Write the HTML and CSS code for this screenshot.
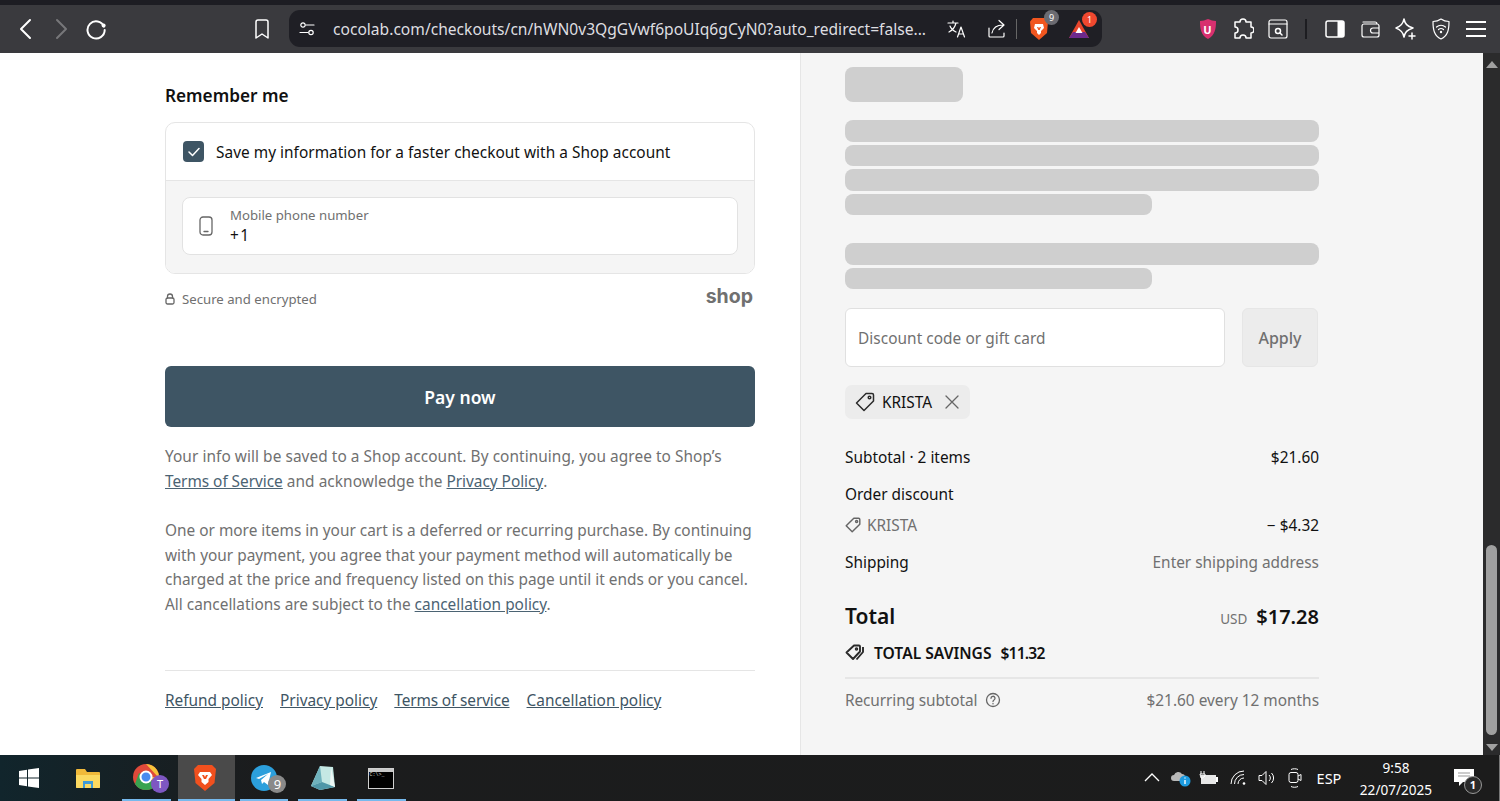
FILE: index.html
```html
<!DOCTYPE html>
<html lang="en">
<head>
<meta charset="utf-8">
<title>Checkout</title>
<link rel="stylesheet" href="styles.css">
</head>
<body>
<header class="chrome">
  <div class="chrome-top"></div>
  <div class="toolbar">
    <span class="slot nav first"><svg width="16" height="22" viewBox="0 0 16 22"><path d="M12 2 3 11l9 9" class="st w2"/></svg></span>
    <span class="slot nav"><svg width="16" height="22" viewBox="0 0 16 22"><path d="M4 2l9 9-9 9" class="st w2 dim"/></svg></span>
    <span class="slot nav"><svg width="22" height="22" viewBox="0 0 22 22"><path d="M19 8.500A8.600 8.600 0 1 0 19.700 12" class="st w2"/><circle cx="18.600" cy="7.400" r="2" fill="#fff"/></svg></span>
    <span class="slot bookmark"><svg width="16" height="20" viewBox="0 0 16 20"><path d="M2 3a2 2 0 0 1 2-2h8a2 2 0 0 1 2 2v16l-6-4-6 4z" class="st w15"/></svg></span>
    <div class="address">
      <span class="site-settings"><svg width="16" height="16" viewBox="0 0 16 16"><circle cx="4" cy="4" r="2.200" class="st w12"/><path d="M7 4h8M1 11.500h8" class="st w12"/><circle cx="12" cy="11.500" r="2.200" class="st w12"/></svg></span>
      <span class="url">cocolab.com/checkouts/cn/hWN0v3QgGVwf6poUIq6gCyN0?auto_redirect=false...</span>
      <span class="addr-icon translate"><svg width="20" height="20" viewBox="0 0 20 20"><path d="M1 4h10M6 2v2M9 4c-1 4-3 7-7 9M3 7c1 3 4 5 6 6M10.500 18l3.500-10 3.500 10M11.800 15h4.400" class="st w12"/></svg></span>
      <span class="addr-icon share"><svg width="20" height="20" viewBox="0 0 20 20"><path d="M2 9v8a1 1 0 0 0 1 1h13a1 1 0 0 0 1-1v-3M5 14c1-5 5-8 11-8M12 1.500 17 6l-5 4.500" class="st w12"/></svg></span>
      <span class="addr-sep"></span>
      <span class="addr-icon brave-mini"><svg width="20" height="24" viewBox="0 0 20 24"><path d="M4 1h12l3 3.500-1 11.500-8 7-8-7L1 4.500z" fill="#f1561f"/><path d="M6 7h8l1 4-3 3v2l-2 2-2-2v-2L5 11z" fill="#fff"/><path d="M8 10h1.300l.7 1.500.7-1.500H12l-1.300 3H9.300z" fill="#f1561f"/></svg><b class="badge grey-badge">9</b></span>
      <span class="addr-icon rewards"><svg width="22" height="20" viewBox="0 0 22 20"><path d="M11 1 21 19H1z" fill="#e8452c"/><path d="M5 13h12l4 6H1z" fill="#6d2a8c"/><path d="M11 8l3.500 6h-7z" fill="#fff"/></svg><b class="badge red-badge">1</b></span>
    </div>
    <span class="slot ublock"><svg width="18" height="22" viewBox="0 0 18 22"><path d="M9 1c3 1 5 2 8 2 0 8-1 14-8 18C2 17 1 11 1 3c3 0 5-1 8-2z" fill="#d8306f"/></svg><b class="ublock-u">U</b></span>
    <span class="slot tool puzzle"><svg width="22" height="22" viewBox="0 0 22 22"><path d="M8 4a3 3 0 0 1 6 0h5v5a3 3 0 0 1 0 6v5h-5a3 3 0 0 0-6 0H3v-5a3 3 0 0 0 0-6V4z" class="st w15"/></svg></span>
    <span class="slot tool find"><svg width="20" height="20" viewBox="0 0 20 20"><rect x="1" y="1" width="18" height="18" rx="2" class="st w12"/><path d="M1 5h18" class="st w12"/><circle cx="10" cy="12" r="2.500" class="st w15"/><path d="m12 14 2 2" class="st w15"/></svg></span>
    <span class="tool-sep"></span>
    <span class="slot tool sidebar"><svg width="20" height="18" viewBox="0 0 20 18"><rect x="1" y="1" width="18" height="16" rx="2" class="st w15"/><path d="M12.500 1H17a2 2 0 0 1 2 2v12a2 2 0 0 1-2 2h-4.500z" fill="#fff"/></svg></span>
    <span class="slot tool wallet"><svg width="20" height="20" viewBox="0 0 20 20"><path d="M3 3h12a2 2 0 0 1 2 2H4a2 2 0 0 0-2 2v9a2 2 0 0 0 2 2h13a2 2 0 0 0 2-2V7a2 2 0 0 0-2-2M19 9h-6a2.500 2.500 0 0 0 0 5h6" class="st w12"/></svg></span>
    <span class="slot tool leo"><svg width="22" height="22" viewBox="0 0 22 22"><path d="M10 1c1 5 3 7 9 9-6 2-8 4-9 9-1-5-3-7-8-9 5-2 7-4 8-9z" class="st w15"/><path d="M18 15v6M15 18h6" class="st w15"/></svg></span>
    <span class="slot tool vpn"><svg width="18" height="22" viewBox="0 0 18 22"><path d="M9 1c2 1.500 5 2.500 8 2.500 0 8-1 14-8 17.500C2 17.500 1 11.500 1 3.500 4 3.500 7 2.500 9 1z" class="st w12"/><path d="M4.500 9a7 7 0 0 1 9 0M6.500 11.500a4 4 0 0 1 5 0" class="st w12"/><circle cx="9" cy="14" r="1.200" fill="#fff"/></svg></span>
    <span class="slot tool menu"><span class="bars"><i></i><i></i><i></i></span></span>
  </div>
</header>

<main class="viewport">
  <section class="left">
    <h2 class="remember">Remember me</h2>
    <div class="card">
      <div class="card-top">
        <span class="checkbox"><svg width="12" height="10" viewBox="0 0 12 10"><path d="M1 5l3.500 3.500L11 1.500" class="st w15"/></svg></span>
        <span class="save-label">Save my information for a faster checkout with a Shop account</span>
      </div>
      <div class="card-bottom">
        <div class="phone-input">
          <svg class="phone-icon" width="14" height="20" viewBox="0 0 14 20"><rect x="1" y="1" width="12" height="18" rx="3" class="gs"/><path d="M5 15.500h4" class="gs"/></svg>
          <div class="phone-text">
            <span class="phone-label">Mobile phone number</span>
            <span class="phone-value">+1</span>
          </div>
        </div>
      </div>
    </div>
    <div class="secure-row">
      <span class="secure"><svg width="10" height="12" viewBox="0 0 10 12"><path d="M2.500 5V3.500a2.500 2.500 0 0 1 5 0V5" class="gs"/><rect x="1" y="5" width="8" height="6" rx="1.500" class="gs"/></svg>Secure and encrypted</span>
      <span class="shop-logo">shop</span>
    </div>
    <button class="pay">Pay now</button>
    <p class="note note-first">Your info will be saved to a Shop account. By continuing, you agree to Shop’s <a>Terms of Service</a> and acknowledge the <a>Privacy Policy</a>.</p>
    <p class="note note-second">One or more items in your cart is a deferred or recurring purchase. By continuing with your payment, you agree that your payment method will automatically be charged at the price and frequency listed on this page until it ends or you cancel. All cancellations are subject to the <a>cancellation policy</a>.</p>
    <nav class="policies"><a>Refund policy</a><a>Privacy policy</a><a class="tight">Terms of service</a><a>Cancellation policy</a></nav>
  </section>

  <aside class="right">
    <div class="skeleton sk-title"></div>
    <div class="sk-group first-group">
      <div class="skeleton sk-line"></div>
      <div class="skeleton sk-line"></div>
      <div class="skeleton sk-line"></div>
      <div class="skeleton sk-line short"></div>
    </div>
    <div class="sk-group second-group">
      <div class="skeleton sk-line"></div>
      <div class="skeleton sk-line short"></div>
    </div>
    <div class="discount">
      <div class="discount-input">Discount code or gift card</div>
      <div class="apply">Apply</div>
    </div>
    <div class="chip">
      <svg width="20" height="20" viewBox="0 0 20 20"><path d="M11 1.500h6a1.500 1.500 0 0 1 1.500 1.500v6L9 18.500 1.500 11z" class="ds"/><circle cx="14.500" cy="5.500" r="1.300" class="ds"/></svg>
      <span>KRISTA</span>
      <svg class="chip-x" width="14" height="14" viewBox="0 0 14 14"><path d="M1 1l12 12M13 1 1 13" class="gs"/></svg>
    </div>
    <div class="row row-subtotal"><span>Subtotal · 2 items</span><span>$21.60</span></div>
    <div class="row row-order"><span>Order discount</span></div>
    <div class="row row-krista">
      <span class="muted krista-label"><svg width="16" height="16" viewBox="0 0 20 20"><path d="M11 1.500h6a1.500 1.500 0 0 1 1.500 1.500v6L9 18.500 1.500 11z" class="gs2"/><circle cx="14.500" cy="5.500" r="1.300" class="gs2"/></svg>KRISTA</span>
      <span>− $4.32</span>
    </div>
    <div class="row row-shipping"><span>Shipping</span><span class="muted">Enter shipping address</span></div>
    <div class="row row-total"><span class="total-label">Total</span><span class="total-amount"><small>USD</small><strong>$17.28</strong></span></div>
    <div class="savings">
      <svg width="20" height="18" viewBox="0 0 20 18"><path d="M9 1.500h5a1 1 0 0 1 1 1v5L8 15 1.500 8.500z" class="ds w2x"/><path d="M18 3v5l-6.500 7.500" class="ds w2x"/><circle cx="11.500" cy="5" r="1" class="ds"/></svg>
      <span>TOTAL SAVINGS</span><span class="savings-amount">$11.32</span>
    </div>
    <div class="row row-recurring">
      <span class="muted recurring"><span>Recurring subtotal</span><svg width="16" height="16" viewBox="0 0 16 16"><circle cx="8" cy="8" r="6.500" class="gs"/><path d="M6 6.300a2 2 0 1 1 3 1.700c-.7.400-1 .8-1 1.500" class="gs"/><circle cx="8" cy="11.700" r=".8" fill="#707070"/></svg></span>
      <span class="muted">$21.60 every 12 months</span>
    </div>
  </aside>

  <div class="scrollbar">
    <span class="arrow up"></span>
    <span class="thumb"></span>
    <span class="arrow down"></span>
  </div>
</main>

<footer class="taskbar">
  <span class="task start"><svg width="20" height="20" viewBox="0 0 20 20"><path d="M0 3l8-1.200V9.500H0zM9 1.600 20 0v9.500H9zM0 10.500h8v7.700L0 17zM9 10.500h11V20L9 18.400z" fill="#fff"/></svg></span>
  <span class="task"><svg width="26" height="22" viewBox="0 0 26 22"><path d="M1 3a1 1 0 0 1 1-1h8l2 3h12a1 1 0 0 1 1 1v14a1 1 0 0 1-1 1H2a1 1 0 0 1-1-1z" fill="#f0b93a"/><path d="M1 8h24v12a1 1 0 0 1-1 1H2a1 1 0 0 1-1-1z" fill="#fbd961"/><path d="M8 14h10v7h-2v-4h-6v4H8z" fill="#3f9ad6"/></svg></span>
  <span class="task open"><svg width="30" height="30" viewBox="0 0 30 30"><circle cx="14" cy="14" r="13" fill="#e0493a"/><path d="M14 14 25 21A13 13 0 0 1 3 21L7 10z" fill="#38a350"/><path d="M14 1a13 13 0 0 1 12 18L14 14h12" fill="#f5c33b"/><circle cx="14" cy="14" r="5.500" fill="#4a8bf0" stroke="#fff" stroke-width="2"/></svg><b class="task-badge purple">T</b></span>
  <span class="task open active"><svg width="24" height="28" viewBox="0 0 24 28"><path d="M5 1h14l4 4-1.500 14L12 27 2.500 19 1 5z" fill="#f1501e"/><path d="M7 8h10l2 3-3.500 4v3L12 21l-3.500-3v-3L5 11z" fill="#fff"/><path d="M9 11h2l1 2 1-2h2l-2 4h-2z" fill="#f1501e"/></svg></span>
  <span class="task open"><svg width="26" height="26" viewBox="0 0 26 26"><circle cx="13" cy="13" r="13" fill="#2c9fdc"/><path d="M5 13 20 7l-3 13-4-3-2 2-1-4 7-6-9 5z" fill="#fff"/></svg><b class="task-badge gray">9</b></span>
  <span class="task open"><svg width="26" height="28" viewBox="0 0 26 28"><path d="M1 22 10 2l13 1 2 20-15 3z" fill="#c5e8e4"/><path d="M1 22 10 2l2 16z" fill="#6fb2bd"/><path d="M12 18l13 5-15 3-9-4z" fill="#4f97a8"/><path d="M21 3l4 20-5-2z" fill="#eef8f6"/></svg></span>
  <span class="task open"><span class="terminal"><span class="terminal-bar"></span><span class="terminal-prompt">C:\&gt;_</span></span></span>
  <div class="tray">
    <span class="tray-item chevron"><svg width="16" height="10" viewBox="0 0 16 10"><path d="M1 8l7-7 7 7" class="wt"/></svg></span>
    <span class="tray-item cloud"><svg width="20" height="18" viewBox="0 0 20 18"><path d="M3 12a3 3 0 0 1 0-6 4.500 4.500 0 0 1 8-1 3 3 0 0 1 3 3v4z" fill="#b8b8b8"/><circle cx="14" cy="12" r="5.500" fill="#1d9be0"/><path d="M14 11v4M14 8.500v1" stroke="#fff" stroke-width="1.400"/></svg></span>
    <span class="tray-item battery"><svg width="20" height="16" viewBox="0 0 20 16"><path d="M3 1v3M6 1v3M2 4h5v2L4.500 8H3z" fill="none" stroke="#fff" stroke-width="1"/><rect x="3" y="5" width="15" height="9" fill="#fff" opacity=".9"/><rect x="18" y="7" width="2" height="5" fill="#fff"/></svg></span>
    <span class="tray-item wifi"><svg width="18" height="16" viewBox="0 0 18 16"><path d="M1 14A13 13 0 0 1 14 1M4.500 14a9.500 9.500 0 0 1 9.500-9.500M8 14a6 6 0 0 1 6-6" class="wt thin"/><circle cx="14" cy="13.500" r="1.300" fill="#fff"/></svg></span>
    <span class="tray-item speaker"><svg width="18" height="16" viewBox="0 0 18 16"><path d="M1 5.500h3L8 1.500v13l-4-4H1zM11 5a4 4 0 0 1 0 6M13.500 3a7 7 0 0 1 0 10" class="wt thin"/></svg></span>
    <span class="tray-item cam"><svg width="14" height="20" viewBox="0 0 14 20"><rect x="1" y="4.500" width="9" height="10" rx="2" class="wt thin"/><path d="m10 8 3-1.500v6L10 11M3 1.500c2-1 5-1 7 0M3 18.500c2 1 5 1 7 0" class="wt thin"/></svg></span>
    <span class="tray-item lang">ESP</span>
    <span class="clock"><span>9:58</span><span>22/07/2025</span></span>
    <span class="tray-item notif"><svg width="20" height="20" viewBox="0 0 20 20"><path d="M0 1h20v13H9l-4 4v-4H0z" fill="#fff"/><path d="M4 5h12M4 8h12" stroke="#999" stroke-width="1"/></svg><b class="notif-count">1</b></span>
    <span class="desk-edge"></span>
  </div>
</footer>
</body>
</html>
```
FILE: styles.css
```css
* { box-sizing: border-box; }
html, body { margin: 0; padding: 0; }
body {
  width: 1500px;
  height: 801px;
  overflow: hidden;
  display: flex;
  flex-direction: column;
  font-family: "Noto Sans", "Open Sans", sans-serif;
  font-size: 15.400px;
  color: #1a1a1a;
  background: #fff;
}
.st { fill: none; stroke: #fff; stroke-linecap: round; stroke-linejoin: round; }
.w12 { stroke-width: 1.200; }
.w15 { stroke-width: 1.500; }
.w2 { stroke-width: 2; }
.dim { stroke: #77777a; }
.gs { fill: none; stroke: #666; stroke-width: 1.300; stroke-linecap: round; stroke-linejoin: round; }
.gs2 { fill: none; stroke: #666; stroke-width: 1.800; stroke-linejoin: round; }
.ds { fill: none; stroke: #2b2b2b; stroke-width: 1.500; stroke-linejoin: round; }
.w2x { stroke-width: 1.900; }
.wt { fill: none; stroke: #fff; stroke-width: 1.300; }
.thin { stroke-width: 1; }

/* browser chrome */
.chrome { flex: none; height: 53px; background: #3a3a3e; }
.chrome-top { height: 5px; background: #1d1d23; }
.toolbar { height: 48px; display: flex; align-items: center; padding-left: 8px; }
.slot { position: relative; flex: none; width: 35px; height: 36px; display: flex; align-items: center; justify-content: center; }
.bookmark { margin-left: 131px; }
.address {
  flex: none;
  margin-left: 10px;
  width: 813px;
  height: 37px;
  margin-top: -1px;
  border-radius: 11px;
  background: #1f1f25;
  display: flex;
  align-items: center;
  color: #e4e4e6;
}
.site-settings { flex: none; width: 44px; padding-left: 10px; display: flex; }
.url { flex: none; width: 610px; font-size: 15.600px; white-space: nowrap; overflow: hidden; color: #dedee0; }
.addr-icon { position: relative; flex: none; display: flex; align-items: center; justify-content: center; }
.translate { width: 20px; margin-left: 4px; }
.share { width: 20px; margin-left: 20px; }
.addr-sep { flex: none; width: 1px; height: 20px; margin-left: 9px; background: #666; }
.brave-mini { width: 24px; margin-left: 10px; }
.rewards { width: 24px; margin-left: 16px; }
.badge {
  position: absolute;
  width: 15px;
  height: 15px;
  border-radius: 50%;
  font-size: 9px;
  line-height: 15px;
  font-weight: 400;
  text-align: center;
  color: #fff;
}
.grey-badge { background: #6b6b72; top: -7px; right: -8px; }
.red-badge { background: #f0482f; top: -7px; right: -6px; }
.ublock { margin-left: 88px; }
.ublock-u { position: absolute; font-size: 11px; color: #fff; font-weight: 700; }
.tool { width: 36px; }
.find { margin-left: -1px; }
.tool-sep { flex: none; width: 2px; height: 20px; margin: 0 10px 0 9px; background: #1d1d21; }
.wallet { margin-left: -1px; }
.leo { margin-left: -1px; }
.menu { margin-left: -1px; }
.bars { display: flex; flex-direction: column; gap: 5px; width: 20px; }
.bars i { display: block; height: 2px; background: #fff; }

/* page */
.viewport { flex: none; height: 702px; display: flex; overflow: hidden; }
.left { flex: none; width: 800px; padding: 31px 45px 0 165px; background: #fff; }
.remember { margin: 0; height: 22px; font-size: 17.200px; font-weight: 600; line-height: 23px; color: #111; }
.card { margin-top: 16px; height: 152px; border: 1px solid #e5e5e5; border-radius: 10px; overflow: hidden; }
.card-top { height: 58px; display: flex; align-items: center; padding-left: 17px; border-bottom: 1px solid #e5e5e5; }
.checkbox { flex: none; width: 21px; height: 21px; margin-right: 12px; border-radius: 4px; background: #3e5564; display: flex; align-items: center; justify-content: center; }
.save-label { color: #111; white-space: nowrap; letter-spacing: .03px; padding-top: 2px; }
.card-bottom { height: 92px; background: #f5f5f5; padding: 16px 16px 0; }
.phone-input { height: 58px; background: #fff; border: 1px solid #e2e2e2; border-radius: 8px; display: flex; align-items: center; padding-left: 16px; }
.phone-icon { flex: none; margin-right: 17px; }
.phone-text { display: flex; flex-direction: column; }
.phone-label { font-size: 13.200px; line-height: 19px; color: #707070; }
.phone-value { font-size: 15.400px; line-height: 20px; letter-spacing: 1.500px; color: #111; padding-top: 1px; }
.secure-row { display: flex; justify-content: space-between; align-items: center; height: 36px; margin-top: 7px; padding-right: 2px; }
.secure { display: flex; align-items: center; gap: 7px; font-size: 13.200px; color: #707070; }
.shop-logo { font-family: "Inter", sans-serif; font-weight: 700; font-size: 19.500px; color: #707070; line-height: 22px; margin-top: -6px; }
.pay {
  display: block;
  width: 100%;
  height: 61px;
  margin-top: 49px;
  border: 0;
  border-radius: 6px;
  background: #3e5564;
  color: #fff;
  font: 600 17.500px "Noto Sans", sans-serif;
}
.note { margin: 0; line-height: 24.500px; color: #707070; }
.note a { color: #4b6373; text-decoration: underline; }
.note-first { margin-top: 18px; letter-spacing: .06px; }
.note-first a { letter-spacing: -.03px; }
.note-second { margin-top: 25px; }
.policies { margin-top: 53px; padding-top: 18px; border-top: 1px solid #e5e5e5; display: flex; gap: 17px; line-height: 24px; }
.policies a { color: #3e5564; text-decoration: underline; }
.policies .tight { letter-spacing: -.12px; }

.right { flex: none; width: 683px; padding: 14px 164px 0 44px; background: #f5f5f5; border-left: 1px solid #e6e6e6; }
.skeleton { background: #cfcfcf; border-radius: 8px; }
.sk-title { width: 118px; height: 35px; }
.sk-group { display: flex; flex-direction: column; gap: 3px; }
.first-group { margin-top: 18px; }
.second-group { margin-top: 28px; }
.sk-line { height: 21.500px; }
.short { width: 307px; }
.discount { display: flex; gap: 17px; margin-top: 19px; padding-right: 1px; }
.discount-input { flex: 1; height: 59px; background: #fff; border: 1px solid #e0e0e0; border-radius: 6px; padding: 1px 0 0 12px; display: flex; align-items: center; color: #707070; letter-spacing: .05px; }
.apply { flex: none; width: 76px; height: 59px; background: #ececec; border: 1px solid #e6e6e6; border-radius: 6px; display: flex; align-items: center; justify-content: center; font-weight: 500; font-size: 16px; color: #707070; }
.chip { margin-top: 18px; width: 125px; height: 34px; border-radius: 7px; background: #ececec; display: flex; align-items: center; padding-left: 10px; gap: 7px; color: #111; }
.chip-x { margin-left: 6px; }
.row { display: flex; justify-content: space-between; align-items: center; color: #111; }
.muted { color: #707070; }
.row-subtotal { margin-top: 26px; height: 24px; }
.row-order { margin-top: 13px; height: 24px; }
.row-krista { margin-top: 7px; height: 24px; }
.krista-label { display: flex; align-items: center; gap: 6px; }
.row-shipping { margin-top: 13px; height: 24px; }
.row-total { margin-top: 26px; height: 32px; }
.total-label { font-size: 21px; font-weight: 600; }
.total-amount { display: flex; align-items: baseline; gap: 9px; }
.total-amount small { font-size: 13.500px; color: #707070; }
.total-amount strong { font-size: 20px; font-weight: 600; }
.savings { display: flex; align-items: center; gap: 9px; margin-top: 9px; height: 24px; font-weight: 600; font-size: 15.600px; color: #111; }
.savings-amount { letter-spacing: -.8px; }
.row-recurring { margin-top: 12px; padding-top: 8px; border-top: 2px solid #e6e6e6; height: 36px; }
.recurring { display: flex; align-items: center; gap: 8px; letter-spacing: -.1px; }

.scrollbar { flex: none; width: 17px; background: #2b2b2c; position: relative; }
.arrow { position: absolute; left: 3px; width: 0; height: 0; border-left: 6px solid transparent; border-right: 6px solid transparent; }
.up { top: 8px; border-bottom: 7px solid #a0a0a0; }
.down { bottom: 4px; border-top: 7px solid #a0a0a0; }
.thumb { position: absolute; top: 492px; left: 3px; width: 11px; height: 190px; border-radius: 6px; background: #a0a0a0; }

/* taskbar */
.taskbar { flex: none; height: 46px; display: flex; align-items: center; background: linear-gradient(90deg, #11252c 0, #1b1c1d 260px, #1c1c1c 100%); color: #fff; }
.task { position: relative; flex: none; width: 58.700px; height: 46px; display: flex; align-items: center; justify-content: center; }
.open::after { content: ""; position: absolute; left: 5px; right: 5px; bottom: 0; height: 2px; background: #76b9ed; }
.active { background: linear-gradient(90deg, transparent 2px, #4a4a4a 2px); }
.active::after { left: 2px; right: 0; }
.task-badge { position: absolute; width: 18px; height: 18px; border-radius: 50%; font-size: 11px; font-weight: 400; line-height: 18px; text-align: center; color: #fff; right: 7px; bottom: 8px; }
.purple { background: #7e57c2; }
.gray { background: #8a8a8a; font-size: 13px; }
.terminal { width: 26px; height: 21px; background: #000; border: 1px solid #d0d0d0; display: flex; flex-direction: column; }
.terminal-bar { height: 3px; background: #c8c8c8; }
.terminal-prompt { font-family: "Liberation Mono", monospace; font-size: 5px; line-height: 7px; color: #ddd; }
.tray { margin-left: auto; display: flex; align-items: center; height: 46px; }
.tray-item { position: relative; flex: none; display: flex; align-items: center; justify-content: center; }
.chevron { width: 16px; margin-right: 11px; }
.cloud { width: 20px; margin-right: 7px; }
.battery { width: 20px; margin-right: 12px; }
.wifi { width: 18px; margin-right: 10px; }
.speaker { width: 18px; margin-right: 12px; }
.cam { width: 14px; margin-right: 14px; }
.lang { font-size: 14.500px; width: 26px; }
.clock { flex: none; width: 80px; margin-left: 14px; padding-top: 2px; display: flex; flex-direction: column; align-items: center; font-size: 13.600px; line-height: 22px; }
.notif { width: 24px; margin-left: 16px; margin-right: 23px; }
.notif-count { position: absolute; right: -6px; bottom: -6px; width: 18px; height: 18px; border-radius: 50%; background: #2a2a2a; border: 1px solid #999; font-size: 11px; line-height: 16px; text-align: center; }
.desk-edge { flex: none; width: 1px; height: 46px; background: #777; }
```
